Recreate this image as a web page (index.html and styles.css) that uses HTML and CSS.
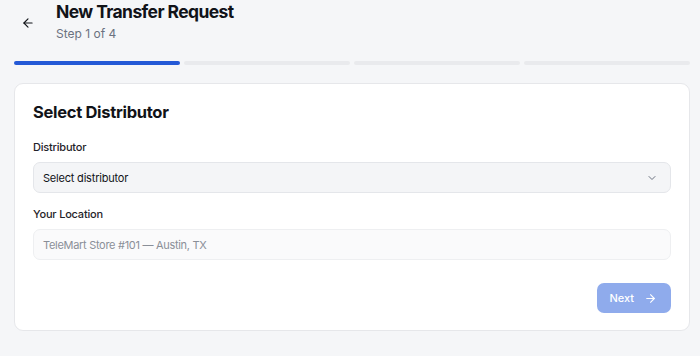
FILE: index.html
```html
<!DOCTYPE html>
<html lang="en">
<head>
  <meta charset="UTF-8" />
  <meta name="viewport" content="width=device-width, initial-scale=1.0"/>
  <title>New Transfer Request</title>
  <link rel="stylesheet" href="styles.css">
</head>
<body>
  <header class="page-head">
    <button class="back-btn" aria-label="Back">
      <svg width="14" height="14" viewBox="0 0 24 24" fill="none" stroke="currentColor" stroke-width="2" stroke-linecap="round" stroke-linejoin="round"><path d="M19 12H5"/><path d="M12 19l-7-7 7-7"/></svg>
    </button>
    <div class="head-text">
      <h1>New Transfer Request</h1>
      <p class="step">Step 1 of 4</p>
    </div>
  </header>

  <div class="progress">
    <span class="seg done"></span>
    <span class="seg"></span>
    <span class="seg"></span>
    <span class="seg"></span>
  </div>

  <main class="card">
    <h2>Select Distributor</h2>

    <div class="field">
      <label>Distributor</label>
      <div class="select">
        <span>Select distributor</span>
        <svg width="12" height="12" viewBox="0 0 24 24" fill="none" stroke="currentColor" stroke-width="2" stroke-linecap="round" stroke-linejoin="round"><path d="M6 9l6 6 6-6"/></svg>
      </div>
    </div>

    <div class="field">
      <label>Your Location</label>
      <div class="input readonly">TeleMart Store #101 — Austin, TX</div>
    </div>

    <div class="actions">
      <button class="next-btn" disabled>
        Next
        <svg width="13" height="13" viewBox="0 0 24 24" fill="none" stroke="currentColor" stroke-width="2" stroke-linecap="round" stroke-linejoin="round"><path d="M5 12h14"/><path d="M12 5l7 7-7 7"/></svg>
      </button>
    </div>
  </main>
</body>
</html>
```

FILE: styles.css
```css
body {
  background-color: #f5f6f8;
  color: #111318;
  font-family: Inter, "Noto Sans", sans-serif;
  margin: 0;
  padding: 0 10px 0 14px;
}

.page-head {
  display: flex;
  align-items: center;
  gap: 14px;
}

.back-btn {
  background: none;
  border: none;
  padding: 0;
  width: 28px;
  height: 28px;
  display: flex;
  align-items: center;
  justify-content: center;
  color: #111318;
  margin-top: 2px;
}

.head-text h1 {
  margin: 0;
  font-size: 17.5px;
  line-height: 24px;
  font-weight: 700;
  letter-spacing: -0.6px;
}

.step {
  margin: 0;
  font-size: 12px;
  line-height: 20px;
  color: #6b7280;
}

/* шаги */
.progress {
  display: grid;
  grid-template-columns: repeat(4, 1fr);
  gap: 4px;
  margin-top: 17px;
}

.seg {
  height: 4px;
  border-radius: 2px;
  background: #e9eaed;
}

.seg.done {
  background: #2459d6;
}

.card {
  margin-top: 18px;
  background: #ffffff;
  border: 1px solid #e6e7ea;
  border-radius: 9px;
  padding: 18px 18px 17px;
}

.card h2 {
  margin: 0;
  font-size: 16.5px;
  line-height: 20px;
  font-weight: 700;
  letter-spacing: -0.3px;
}

.field {
  margin-top: 12px;
}

.card h2 + .field {
  margin-top: 16px;
}

.field label {
  display: block;
  font-size: 11px;
  line-height: 18px;
  font-weight: 500;
  letter-spacing: -0.2px;
  color: #1f2329;
  margin-bottom: 6px;
}

.select, .input {
  height: 31px;
  box-sizing: border-box;
  border-radius: 7px;
  padding: 0 12px 0 9px;
  font-size: 11px;
  letter-spacing: -0.2px;
  display: flex;
  align-items: center;
}

.select {
  justify-content: space-between;
  background: #f4f5f7;
  border: 1px solid #e4e6ea;
  color: #111318;
}

.select svg {
  color: #6b7280;
}

.input.readonly {
  background: #fafafb;
  border: 1px solid #eeeff1;
  color: #8a8f98;
  letter-spacing: -0.3px;
}

.actions {
  display: flex;
  justify-content: flex-end;
  margin-top: 23px;
}

.next-btn {
  height: 30px;
  border: none;
  border-radius: 7px;
  background: #8fabec;
  color: #ffffff;
  font-family: inherit;
  font-size: 11px;
  font-weight: 500;
  padding: 0 14px 0 12px;
  display: flex;
  align-items: center;
  gap: 10px;
}
```
